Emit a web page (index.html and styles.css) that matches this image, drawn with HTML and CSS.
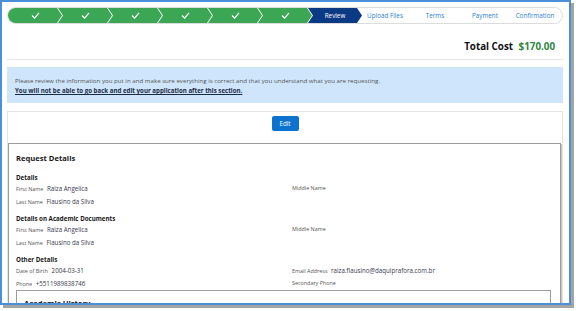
FILE: index.html
```html
<html>
<head>
	<title>Review</title>
	<link rel="stylesheet" href="styles.css">
</head>
<body>
	<div class="frame">
		<div class="path">
			<div class="step done first"><svg viewBox="0 0 10 8"><polyline points="1,4 4,7 9,1"/></svg></div>
			<div class="step done"><svg viewBox="0 0 10 8"><polyline points="1,4 4,7 9,1"/></svg></div>
			<div class="step done"><svg viewBox="0 0 10 8"><polyline points="1,4 4,7 9,1"/></svg></div>
			<div class="step done"><svg viewBox="0 0 10 8"><polyline points="1,4 4,7 9,1"/></svg></div>
			<div class="step done"><svg viewBox="0 0 10 8"><polyline points="1,4 4,7 9,1"/></svg></div>
			<div class="step done"><svg viewBox="0 0 10 8"><polyline points="1,4 4,7 9,1"/></svg></div>
			<div class="step current">Review</div>
			<div class="step todo">Upload Files</div>
			<div class="step todo">Terms</div>
			<div class="step todo">Payment</div>
			<div class="step todo last">Confirmation</div>
		</div>

		<div class="total">
			Total Cost <span class="amount">$170.00</span>
		</div>

		<div class="notice">
			<p>Please review the information you put in and make sure everything is correct and that you understand what you are requesting.</p>
			<p class="warn">You will not be able to go back and edit your application after this section.</p>
		</div>

		<div class="card">
			<div class="actions">
				<button class="btn">Edit</button>
			</div>

			<div class="box">
				<h2>Request Details</h2>

				<h3>Details</h3>
				<div class="grid">
					<div class="field"><span class="label">First Name</span> Raiza Angelica</div>
					<div class="field"><span class="label">Middle Name</span></div>
					<div class="field"><span class="label">Last Name</span> Flausino da Silva</div>
					<div class="field"></div>
				</div>

				<h3>Details on Academic Documents</h3>
				<div class="grid">
					<div class="field"><span class="label">First Name</span> Raiza Angelica</div>
					<div class="field"><span class="label">Middle Name</span></div>
					<div class="field"><span class="label">Last Name</span> Flausino da Silva</div>
					<div class="field"></div>
				</div>

				<h3>Other Details</h3>
				<div class="grid last">
					<div class="field"><span class="label">Date of Birth</span> 2004-03-31</div>
					<div class="field"><span class="label">Email Address</span> raiza.flausino@daquiprafora.com.br</div>
					<div class="field"><span class="label">Phone</span> +5511989838746</div>
					<div class="field"><span class="label">Secondary Phone</span></div>
				</div>

				<div class="box inner">
					<h2>Academic History</h2>
				</div>
			</div>
		</div>
	</div>
</body>
</html>
```

FILE: styles.css
```css
body {
	margin: 0;
	padding: 0;
	background-color: #fff;
	font-family: "Open Sans", Arial, sans-serif;
	color: #181818;
}

.frame {
	width: 571px;
	height: 305px;
	box-sizing: border-box;
	border: 2px solid #4a8fd8;
	box-shadow: 3px 3px 0 #a4a4a4;
	padding: 5px 6px 0 5px;
	overflow: hidden;
	background-color: #fff;
}

/* progress path */
.path {
	display: flex;
	height: 17px;
	border: 1px solid #dcdcdc;
	border-radius: 9px;
	overflow: hidden;
	box-sizing: border-box;
}

.step {
	flex: 1;
	display: flex;
	align-items: center;
	justify-content: center;
	margin-right: -4px;
	font-size: 6.3px;
	clip-path: polygon(0 0, calc(100% - 5px) 0, 100% 50%, calc(100% - 5px) 100%, 0 100%, 5px 50%);
}

.step.first {
	clip-path: polygon(0 0, calc(100% - 5px) 0, 100% 50%, calc(100% - 5px) 100%, 0 100%);
}

.step.last {
	margin-right: 0;
	clip-path: none;
}

.step svg {
	width: 9px;
	height: 7px;
	fill: none;
	stroke: #fff;
	stroke-width: 1.4;
}

.done {
	background-color: #3ba755;
}

.current {
	background-color: #0b3a84;
	color: #fff;
}

.todo {
	color: #2b7fd4;
}

/* total */
.total {
	text-align: right;
	font-size: 9.8px;
	font-weight: bold;
	padding: 16px 8px 6px 0;
	border-bottom: 1px solid #e6e6e6;
	color: #111;
}

.amount {
	color: #2e8540;
	margin-left: 3px;
}

.notice {
	margin-top: 7px;
	height: 36px;
	box-sizing: border-box;
	background-color: #cfe5fc;
	padding: 9px 8px 0 8px;
	font-size: 6.15px;
	color: #555;
}

.notice p {
	margin: 0 0 1px 0;
}

.warn {
	font-weight: bold;
	text-decoration: underline;
	color: #1a2a44;
}

.card {
	margin-top: 8px;
	border: 1px solid #e4e4e4;
}

.actions {
	text-align: center;
	padding-top: 4px;
	height: 27px;
}

.btn {
	background-color: #0b72d0;
	color: #fff;
	border: none;
	border-radius: 2px;
	font-family: inherit;
	font-size: 6.3px;
	width: 27px;
	height: 15px;
	padding: 0;
}

.box {
	border: 1px solid #9c9c9c;
	box-shadow: 1px 1px 0 #c6c6c6;
	margin-right: 1px;
	padding: 9px 8px 0 7px;
	font-size: 6.2px;
}

.box h2 {
	font-size: 7.6px;
	line-height: 11px;
	margin: 0 0 10px 0;
}

.box h3 {
	font-size: 6.2px;
	line-height: 8px;
	margin: 0;
}

.grid {
	display: grid;
	grid-template-columns: 276px 1fr;
	margin-bottom: 7px;
}

.grid.last {
	margin-bottom: 0;
}

.field {
	height: 13px;
	line-height: 13px;
	color: #3a3a4c;
}

.label {
	font-size: 5.4px;
	color: #555;
	margin-right: 2px;
}

.box.inner {
	margin: 0 1px 0 0;
	box-shadow: none;
	padding-top: 7px;
}
```
